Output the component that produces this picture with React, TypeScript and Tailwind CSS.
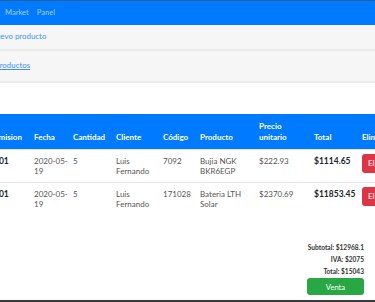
import React from "react";

const cols = "grid-cols-[40px_39px_43px_47px_37px_59px_55px_48px_70px]";

type Row = { id: string; fecha: [string, string]; cant: string; cliente: [string, string]; codigo: string; prod: [string, string]; precio: string; total: string };

const rows: Row[] = [
  { id: "001", fecha: ["2020-05-", "19"], cant: "5", cliente: ["Luis", "Fernando"], codigo: "7092", prod: ["Bujia NGK", "BKR6EGP"], precio: "$222.93", total: "$1114.65" },
  { id: "001", fecha: ["2020-05-", "19"], cant: "5", cliente: ["Luis", "Fernando"], codigo: "171028", prod: ["Bateria LTH", "Solar"], precio: "$2370.69", total: "$11853.45" },
];

function Two({ a, b }: { a: string; b: string }) {
  return (
    <div className="flex flex-col">
      <span>{a}</span>
      <span>{b}</span>
    </div>
  );
}

export default function App() {
  return (
    <div className="w-[375px] h-[302px] overflow-hidden bg-white flex flex-col font-['Lato',sans-serif]">
      <div className="h-px bg-[#2a5e9c]" />
      <nav className="h-[24px] bg-[#007bff] flex items-center gap-[8px] pl-[5px] text-[7.6px] text-[#a3ceff]">
        <span>Market</span>
        <span>Panel</span>
      </nav>
      <div className="h-px bg-[#f9f9f9]" />
      <div className="h-[23px] bg-[#f6f6f6] flex items-center -ml-[10px] text-[7.9px] text-[#3d92f5] pb-[2px]">
        <span>Nuevo producto</span>
      </div>
      <div className="h-[2px] bg-[#ececec]" />
      <div className="h-[30px] bg-[#f6f6f6] flex items-center -ml-[5px] text-[7.9px] text-[#3d92f5]">
        <span className="underline">Productos</span>
      </div>
      <div className="h-[2px] bg-[#ececec]" />
      <div className="h-[31px]" />
      <div className="-ml-[6px] text-[8px] leading-[10.5px]">
        <div className={`grid ${cols} bg-[#007bff] text-white font-bold h-[35px] items-end pb-[7px]`}>
          <span>Emision</span>
          <span>Fecha</span>
          <span>Cantidad</span>
          <span>Cliente</span>
          <span>Código</span>
          <span>Producto</span>
          <div className="flex flex-col"><span>Precio</span><span>unitario</span></div>
          <span>Total</span>
          <span>Eliminar</span>
        </div>
        {rows.map((r, i) => (
          <div key={i} className={`grid ${cols} border-t border-[#e6e6e6] py-[5.5px] text-[#555]`}>
            <span className="font-bold text-[#212529] text-[8.5px] leading-[11px]">{r.id}</span>
            <Two a={r.fecha[0]} b={r.fecha[1]} />
            <span>{r.cant}</span>
            <Two a={r.cliente[0]} b={r.cliente[1]} />
            <span>{r.codigo}</span>
            <Two a={r.prod[0]} b={r.prod[1]} />
            <span>{r.precio}</span>
            <span className="font-bold text-[#212529] text-[8.5px] leading-[11px]">{r.total}</span>
            <div className="-mt-[2px]">
              <span className="inline-flex items-center h-[19px] px-[6px] rounded-[3px] bg-[#dc3545] text-white text-[8px]">Eliminar</span>
            </div>
          </div>
        ))}
      </div>
      <div className="flex flex-col items-end pr-[11px] pt-[26px] text-[6.6px] leading-[12px] font-bold text-[#333]">
        <span>Subtotal: $12968.1</span>
        <span>IVA: $2075</span>
        <span>Total: $15043</span>
        <span className="mt-[1px] w-[57px] h-[17px] rounded-[3px] bg-[#28a745] text-white font-normal text-[7.6px] flex items-center justify-center">Venta</span>
      </div>
      <div className="flex-1" />
      <div className="h-[2px] bg-[#3a3a3a]" />
    </div>
  );
}
